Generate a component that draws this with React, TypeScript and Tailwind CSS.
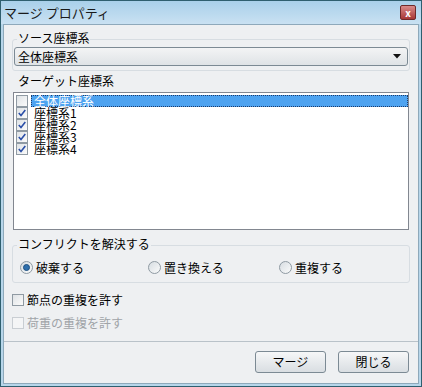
import { useState } from "react";

const jp = { fontFamily: '"Noto Sans CJK JP", "Noto Sans", sans-serif' };

function Check({ checked, disabled }: { checked?: boolean; disabled?: boolean }) {
    return (
        <span
            className={`flex h-[12px] w-[12px] shrink-0 items-center justify-center border ${
                disabled ? "border-[#c9ced3] bg-[#f4f5f6]" : "border-[#8f9aa3] bg-gradient-to-br from-[#dfe3e6] to-[#fbfbfb]"
            }`}
        >
            {checked && (
                <svg width="8" height="8" viewBox="0 0 8 8">
                    <path d="M0.8 4 L3 6.5 L7.3 1" fill="none" stroke="#2b4fa8" strokeWidth="1.6" />
                </svg>
            )}
        </span>
    );
}

function Radio({ checked }: { checked?: boolean }) {
    return (
        <span className="flex h-[13px] w-[13px] shrink-0 items-center justify-center rounded-full border border-[#8f9aa3] bg-gradient-to-br from-[#d7dde2] to-[#fafbfb]">
            {checked && <span className="h-[7px] w-[7px] rounded-full border border-[#1d4f80] bg-[#2e6fad]" />}
        </span>
    );
}

function App() {
    const [items, setItems] = useState([false, true, true, true, true]);
    const names = ["全体座標系", "座標系1", "座標系2", "座標系3", "座標系4"];
    const [mode, setMode] = useState(0);

    return (
        <div className="flex h-[387px] w-[422px] flex-col border border-[#2f5f6f] bg-[#b7d6ea] text-[12px] leading-[12px] text-black" style={jp}>
            <div className="flex h-[23px] shrink-0 items-center justify-between bg-gradient-to-b from-[#a9d0ea] to-[#c9e1f2] pl-[3px] pr-[5px]">
                <span className="text-[13px] text-[#1a1a1a]">マージ プロパティ</span>
                <span className="flex h-[15px] w-[16px] items-center justify-center rounded-[2px] border border-[#6e2a2a] bg-gradient-to-b from-[#d98a8a] to-[#a83636] text-[10px] font-bold leading-none text-white">
                    x
                </span>
            </div>
            <div className="mx-[2px] mb-[2px] flex flex-1 flex-col border border-[#8ea9bb] bg-[#eef0f2]">
                <div className="flex flex-col px-[8px]">
                    <div className="relative mt-[14px] h-[32px] rounded-[3px] border border-[#d7dde2] px-[1px]">
                        <span className="absolute -top-[8px] left-[4px] bg-[#eef0f2] px-[1px]">ソース座標系</span>
                        <div className="mt-[7px] flex h-[19px] items-center justify-between rounded-[3px] border border-[#7c8a94] bg-gradient-to-b from-[#f3f4f5] to-[#dfe3e6] pl-[3px] pr-[6px]">
                            <span>全体座標系</span>
                            <svg width="8" height="5" viewBox="0 0 8 5">
                                <path d="M0 0 H8 L4 4.5 Z" fill="#111" />
                            </svg>
                        </div>
                    </div>
                    <div className="ml-[6px] mt-[4px]">ターゲット座標系</div>
                    <div className="mx-[1px] mt-[5px] h-[138px] border border-[#828790] bg-white pl-[2px] pt-[2px]">
                        {names.map((n, i) => (
                            <div key={n} className="flex h-[12px] items-center gap-[3px]" onClick={() => setItems(items.map((v, j) => (j === i ? !v : v)))}>
                                <Check checked={items[i]} />
                                {i === 0 ? (
                                    <span className="flex h-[12px] flex-1 items-center border border-dotted border-[#1e3b6a] bg-[#4ea3f0] pl-[2px] text-white">{n}</span>
                                ) : (
                                    <span className="pl-[3px]">{n}</span>
                                )}
                            </div>
                        ))}
                    </div>
                    <div className="relative mt-[15px] h-[38px] rounded-[3px] border border-[#d7dde2]">
                        <span className="absolute -top-[8px] left-[4px] bg-[#eef0f2] px-[1px]">コンフリクトを解決する</span>
                        <div className="mt-[15px] flex items-center pl-[7px]">
                            {["破棄する", "置き換える", "重複する"].map((t, i) => (
                                <label key={t} className={`flex items-center gap-[3px] ${i === 0 ? "w-[128px]" : i === 1 ? "w-[131px]" : ""}`} onClick={() => setMode(i)}>
                                    <Radio checked={mode === i} />
                                    <span>{t}</span>
                                </label>
                            ))}
                        </div>
                    </div>
                    <div className="mt-[11px] flex items-center gap-[3px]">
                        <Check />
                        <span>節点の重複を許す</span>
                    </div>
                    <div className="mt-[11px] flex items-center gap-[3px] text-[#a0a4a8]">
                        <Check disabled />
                        <span>荷重の重複を許す</span>
                    </div>
                </div>
                <div className="mt-auto border-t border-[#b9c2c9]" />
                <div className="flex h-[41px] items-start justify-end gap-[12px] pr-[9px] pt-[9px]">
                    <button className="h-[22px] w-[71px] rounded-[3px] border border-[#7c8a94] bg-gradient-to-b from-[#f6f7f8] to-[#d9dee2]">マージ</button>
                    <button className="h-[22px] w-[71px] rounded-[3px] border border-[#7c8a94] bg-gradient-to-b from-[#f6f7f8] to-[#d9dee2]">閉じる</button>
                </div>
            </div>
        </div>
    );
}

export default App;
